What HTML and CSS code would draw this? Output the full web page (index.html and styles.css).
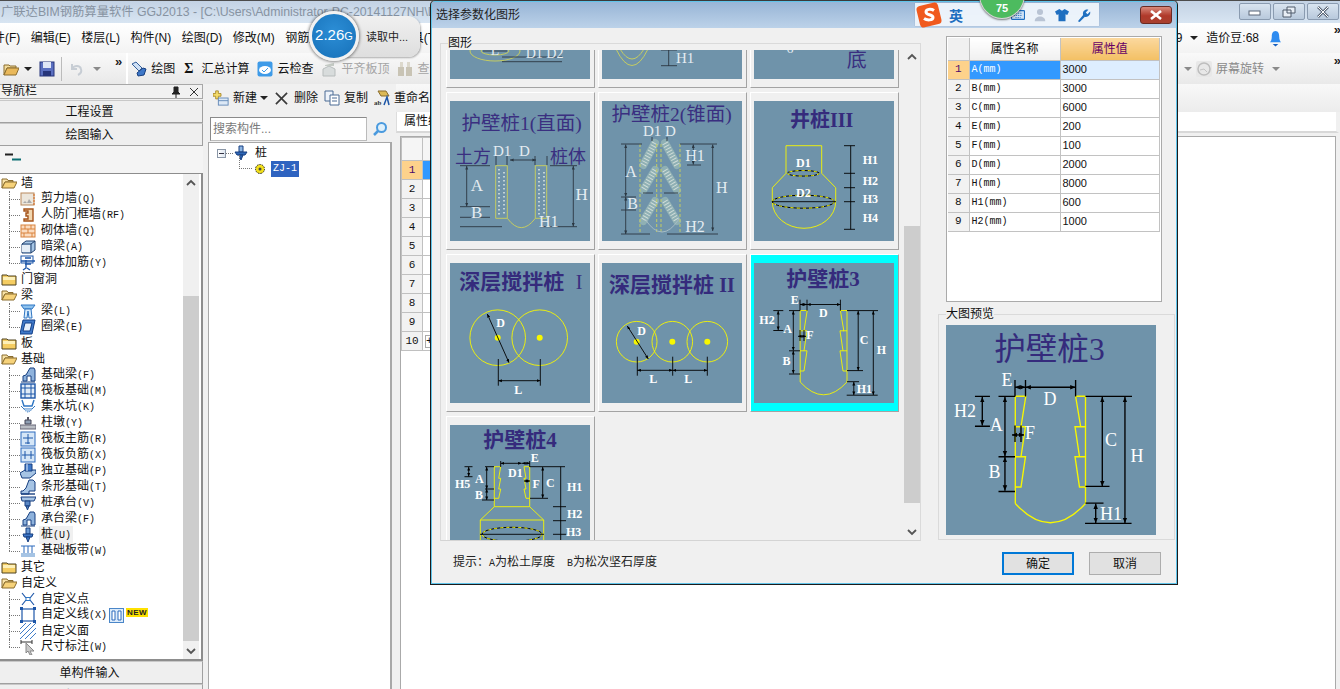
FILE: index.html
```html
<!DOCTYPE html>
<html lang="zh">
<head>
<meta charset="utf-8">
<title>广联达BIM钢筋算量软件 GGJ2013</title>
<link rel="stylesheet" href="styles.css">
</head>
<body>
<svg class="defs" aria-hidden="true">
  <defs>
    <marker id="a" viewBox="0 0 6 6" refX="6" refY="3" markerWidth="4" markerHeight="4" orient="auto-start-reverse"><path d="M0 0.5L6 3L0 5.5z" fill="#000"/></marker>
    <marker id="g" viewBox="0 0 6 6" refX="6" refY="3" markerWidth="4" markerHeight="4" orient="auto-start-reverse"><path d="M0 0.5L6 3L0 5.5z" fill="#2b3742"/></marker>
    <symbol id="fo" viewBox="0 0 16 16"><path d="M1 13V4h5l1 1.5h5V7H4z" fill="#f8e3a8" stroke="#8a6d2f"/><path d="M1 13l3-6h12l-3 6z" fill="#f6d27a" stroke="#8a6d2f"/></symbol>
    <symbol id="fc" viewBox="0 0 16 16"><path d="M1 14V4h5l1 1h8v9z" fill="#f5cd62" stroke="#4f4320"/><path d="M2 6h12v3H2z" fill="#fdf0b8"/></symbol>
    <symbol id="i1" viewBox="0 0 16 16"><rect x="1" y="2" width="13" height="12" fill="#ece6dc" stroke="#b98a5e"/><path d="M3 12l2-2 2 2 2-4 3 4z" fill="#aaa"/><path d="M14 3v11" stroke="#d9691c" stroke-dasharray="2 1"/></symbol>
    <symbol id="i2" viewBox="0 0 16 16"><path d="M4 2h9v12H4v-2h4V9H6V6h2V4H4z" fill="#f2d7b0" stroke="#a5531a" stroke-width="1.4"/></symbol>
    <symbol id="i3" viewBox="0 0 16 16"><rect x="1" y="2" width="14" height="12" fill="#fbdcc0" stroke="#d9833f"/><path d="M1 6h14M1 10h14M5 2v4M11 2v4M8 6v4M4 10v4M12 10v4" stroke="#d9833f"/></symbol>
    <symbol id="i4" viewBox="0 0 16 16"><path d="M2 5l4-3h9v9l-4 3H2z" fill="#a7c7e6" stroke="#24426e"/><path d="M2 5h9v9M11 5l4-3" fill="none" stroke="#24426e"/><path d="M2 6h8v7H2z" fill="#e6eef6"/></symbol>
    <symbol id="i5" viewBox="0 0 16 16"><rect x="1" y="1" width="12" height="7" fill="#fff" stroke="#1d56a8"/><path d="M3 15l3-2V5M10 15l-3-2M1 6h14M5 3h6M5 9h6" stroke="#1d56a8" stroke-width="1.4" fill="none"/></symbol>
    <symbol id="i6" viewBox="0 0 16 16"><path d="M1 2h14l-3 4H4z" fill="#8ec2ee" stroke="#2f76c3"/><path d="M5 6h6l1 9H9L8 8l-1 7H4z" fill="#d8ebfb" stroke="#2f76c3"/></symbol>
    <symbol id="i7" viewBox="0 0 16 16"><path d="M3 1h12l-3 14H0z" fill="#3f78c8" stroke="#123f88"/><path d="M5 4h7l-2 8H3z" fill="#e5eefb" stroke="#123f88"/></symbol>
    <symbol id="i8" viewBox="0 0 16 16"><path d="M3 14V9l3-1 4-7h4l1 2v11h-4V9H7v5z" fill="#8eb2dc" stroke="#173f80"/><path d="M1 15h14" stroke="#173f80"/></symbol>
    <symbol id="i9" viewBox="0 0 16 16"><rect x="1" y="1" width="14" height="14" fill="#e2ecf7" stroke="#1d56a8" stroke-width="1.4"/><path d="M5 1v14M11 1v14M1 5h14M1 11h14" stroke="#1d56a8"/></symbol>
    <symbol id="i10" viewBox="0 0 16 16"><path d="M2 1l2 6h8l2-6" fill="none" stroke="#2f76c3" stroke-width="1.4"/><path d="M1 7l3 3h8l3-3" fill="none" stroke="#2f76c3"/><path d="M4 10q4 6 8 0" fill="#a9c8ea" stroke="#2f76c3" stroke-dasharray="1 1"/></symbol>
    <symbol id="i11" viewBox="0 0 16 16"><path d="M5 9V5h6v4z" fill="#8f9fb3" stroke="#445"/><path d="M7 2h2v3H7z" fill="#556"/><rect x="0" y="10" width="16" height="4" fill="#b9bdc4" stroke="#667"/></symbol>
    <symbol id="i12" viewBox="0 0 16 16"><rect x="1" y="1" width="14" height="14" fill="#d5e6f7" stroke="#2c6bbd"/><path d="M8 3v10M3 7h10M5 12h5" stroke="#1d56a8"/></symbol>
    <symbol id="i13" viewBox="0 0 16 16"><rect x="1" y="1" width="14" height="14" fill="#d5e6f7" stroke="#2c6bbd"/><path d="M2 8h12M5 4v8M11 4v8" stroke="#1d56a8"/></symbol>
    <symbol id="i14" viewBox="0 0 16 16"><path d="M0 10l5-3h11v3l-6 5H2z" fill="#a6c4e4" stroke="#173f80"/><path d="M5 1h7v7H5z" fill="#3f78c8" stroke="#173f80"/><path d="M7 1v7" stroke="#e5eefb"/></symbol>
    <symbol id="i15" viewBox="0 0 16 16"><path d="M1 15v-3h2l3-3 3-8h4l2 2v9h-2L9 12v3z" fill="#a6c4e4" stroke="#173f80"/><path d="M1 15h14" stroke="#173f80" stroke-width="1.4"/></symbol>
    <symbol id="i16" viewBox="0 0 16 16"><path d="M1 2h15l-2 4H2z" fill="#a6c4e4" stroke="#173f80"/><path d="M5 6h5v5H5z" fill="#5a87c4" stroke="#173f80"/><path d="M6 11h3l-1.500 4z" fill="#5a87c4" stroke="#173f80"/></symbol>
    <symbol id="i17" viewBox="0 0 16 16"><path d="M6 1h4v6H6z" fill="#6d9bd4" stroke="#173f80"/><path d="M3 7h10l-1 3H4z" fill="#3f78c8" stroke="#173f80"/><path d="M6 10h4l-2 5z" fill="#3f78c8" stroke="#173f80"/></symbol>
    <symbol id="i18" viewBox="0 0 16 16"><path d="M1 3h14M1 13h14M4 3v10M8 3v10M12 3v10" stroke="#2c6bbd" fill="none"/><rect x="1" y="10" width="14" height="4" fill="#a6c4e4"/></symbol>
    <symbol id="i19" viewBox="0 0 16 16"><path d="M2 2l4 5M14 2l-4 5M2 14l4-5M14 14l-4-5" stroke="#1d56a8" stroke-width="1.200"/><rect x="6" y="6.500" width="4" height="3" fill="#fff" stroke="#2f76c3"/></symbol>
    <symbol id="i20" viewBox="0 0 16 16"><rect x="2" y="2" width="12" height="12" fill="#fff" stroke="#1d56a8" stroke-width="1.200"/><path d="M0 0h3v3H0zM13 0h3v3h-3zM0 13h3v3H0zM13 13h3v3h-3z" fill="#1d56a8"/></symbol>
    <symbol id="i21" viewBox="0 0 16 16"><path d="M0 6l6-6M0 11L11 0M0 16L16 0M5 16L16 5M10 16l6-6" stroke="#3d7cc9"/></symbol>
    <symbol id="i22" viewBox="0 0 16 16"><path d="M1 1v4M1 3h11M12 1v4" stroke="#333"/><path d="M6 4l8 8-4 0 2 4-2 0-2-4-2 2z" fill="#c9c9c9" stroke="#888"/></symbol>
    <symbol id="pile" viewBox="0 0 16 16"><path d="M6 1h4v6H6z" fill="#8db5e2" stroke="#173f80"/><path d="M2 7h12l-2 3H4z" fill="#2e66b5" stroke="#173f80"/><path d="M6 10h4l-2 5z" fill="#2e66b5" stroke="#173f80"/></symbol>

    <symbol id="hbz3" viewBox="0 0 140 140">
      <text class="ti vb" x="69" y="23" font-size="21">护壁桩<tspan class="se">3</tspan></text>
      <path class="y" d="M46.200 47.500V119M46.200 47.500h7L50 67.800h3L50 87.800h3L50 108h-3.800M93 47.500h-6.600l3.400 20.300H86l3 20H86l3 20.200h4M93 47.500V119M46.200 67.800H50M46.200 87.800H50M93 67.800h-4M93 87.800h-4M46.200 119Q69.600 144.600 93 119"/>
      <path class="ln" d="M35 47.600h11M93 47.600h31M46 36.700v11M53 36.700v11M86.400 36.700v11M19.300 47.600h10M19.300 67.500h10M35 87.800h11M35 111h11M93 107.600h16M92.700 132.200h31M93 118.700h12M46 67v11M50 67v11"/>
      <g class="ln" marker-start="url(#a)" marker-end="url(#a)"><path d="M46 41.500h7"/><path d="M53 41.500h33.400"/><path d="M24.200 48v19"/><path d="M39.300 48v39.500"/><path d="M39.300 88v22.500"/><path d="M104.200 48v59.500"/><path d="M119.300 48v84"/><path d="M99.800 119v13"/><path d="M44 73.300h8"/></g>
      <g class="t"><text x="40.700" y="40.700">E</text><text x="69.300" y="53.600">D</text><text x="5.300" y="61" class="st">H2</text><text x="33.500" y="70.400">A</text><text x="56" y="76">F</text><text x="110" y="80.700">C</text><text x="127.300" y="91">H</text><text x="32.400" y="101.800">B</text><text x="102.700" y="130" class="st">H1</text></g>
    </symbol>
  </defs>
</svg>

<div class="app">
  <header class="titlebar">
    <span class="title-text">广联达BIM钢筋算量软件 GGJ2013 - [C:\Users\Administrator-PC-20141127NH\Desktop</span>
    <div class="winbtns">
      <button class="winbtn"><svg viewBox="0 0 16 12"><rect x="2" y="5" width="11" height="4" fill="#fff" stroke="#5b6778"/></svg></button>
      <button class="winbtn"><svg viewBox="0 0 16 12"><path d="M6 1h8v6H6zM2 4h8v7H2z" fill="#e8eef5" stroke="#4f5b6b"/></svg></button>
      <button class="winbtn"><svg viewBox="0 0 16 12"><path d="M3 1l10 10M13 1L3 11" stroke="#5b6778" stroke-width="2.600"/><path d="M3 1l10 10M13 1L3 11" stroke="#fff" stroke-width="1"/></svg></button>
    </div>
  </header>

  <nav class="menubar">
    <span class="menu first">文件(F)</span><span class="menu">编辑(E)</span><span class="menu">楼层(L)</span><span class="menu">构件(N)</span><span class="menu">绘图(D)</span><span class="menu">修改(M)</span><span class="menu">钢筋量(Q)</span><span class="menu">视图(V)</span><span class="menu">工具(T)</span>
    <div class="menu-right">
      <span class="menu">9</span><span class="caret dark"></span><span class="menu">造价豆:68</span>
      <svg class="bell" viewBox="0 0 14 18"><path d="M7 1c3 0 4 3 4 6s1 5 2 6H1c1-1 2-3 2-6s1-6 4-6z" fill="#2f8cf0"/><path d="M4 15h6l-3 2.500z" fill="#1660c0"/></svg>
      <span class="more">»</span>
    </div>
  </nav>

  <div class="toolbar">
    <svg class="tb-ic" viewBox="0 0 16 16"><path d="M1 14V4h5l1 1h6v2H4z" fill="#f3dc9d" stroke="#8a6d2f"/><path d="M1 14l3-7h12l-3 7z" fill="#e9b85a" stroke="#8a6d2f"/></svg>
    <span class="caret dark gap-a"></span>
    <svg class="tb-ic gap-b" viewBox="0 0 16 16"><rect x="1" y="1" width="14" height="14" fill="#5a6fc0" stroke="#27357a"/><rect x="4" y="1" width="8" height="6" fill="#dfe6f6"/><rect x="4" y="10" width="8" height="5" fill="#27357a"/></svg>
    <span class="tb-div"></span>
    <svg class="tb-ic gap-c" viewBox="0 0 16 16"><path d="M3 3v5h5M3 8c2-4 8-4 9 0 1 3-1 5-3 6" fill="none" stroke="#c7cdd4" stroke-width="2"/></svg>
    <span class="caret gap-d"></span>
    <span class="more gap-e">»</span>
    <span class="tb-sep"></span>
    <svg class="tb-ic" viewBox="0 0 16 16"><path d="M1 3l4-2 6 6-3 3z" fill="#cfe0f4" stroke="#345f9a"/><path d="M6 12l6-5 3 1-2 6-6 1z" fill="#3f78c8" stroke="#173f80"/></svg>
    <span class="tb-txt">绘图</span>
    <span class="sigma">Σ</span>
    <span class="tb-txt">汇总计算</span>
    <svg class="tb-ic gap-f" viewBox="0 0 16 16"><rect x="0.500" y="0.500" width="15" height="15" rx="2" fill="#3f9be8"/><ellipse cx="8" cy="9" rx="6" ry="4" fill="#fff"/><path d="M5 9l2 2 4-4" stroke="#3f9be8" fill="none"/></svg>
    <span class="tb-txt">云检查</span>
    <svg class="tb-ic gap-f" viewBox="0 0 16 16"><path d="M2 15V8l6-3 6 3v7z" fill="#d8dcdc" stroke="#b7bcbc"/><path d="M4 4l9-2v3H4z" fill="#c5cbc5"/></svg>
    <span class="tb-txt off">平齐板顶</span>
    <svg class="tb-ic gap-f" viewBox="0 0 16 16"><rect x="1" y="6" width="6" height="9" fill="#c9c4b5"/><rect x="9" y="6" width="6" height="9" fill="#c9c4b5"/><rect x="3" y="1" width="3" height="5" fill="#dcd8cc"/><rect x="10" y="1" width="3" height="5" fill="#dcd8cc"/></svg>
    <span class="tb-txt off">查看</span>
    <div class="menu-right second">
      <span class="caret"></span>
      <svg class="tb-ic" viewBox="0 0 16 16"><rect x="0" y="0" width="16" height="16" rx="2" fill="#e8e8e8"/><circle cx="8" cy="8" r="6" fill="none" stroke="#bdbdbd" stroke-width="1.500"/><path d="M4 9l4-1 3 3" stroke="#c4c4c4" fill="none"/></svg>
      <span class="tb-txt off2">屏幕旋转</span><span class="caret"></span>
      <span class="more">»</span>
    </div>
  </div>

  <div class="workspace">
    <aside class="nav">
      <div class="nav-head"><span>导航栏</span><span class="nav-tools"><svg viewBox="0 0 10 12"><path d="M3 1h4v5l2 2H1l2-2zM5 8v4" fill="#222" stroke="#222"/></svg><svg viewBox="0 0 10 12"><path d="M1 2l8 8M9 2l-8 8" stroke="#333"/></svg></span></div>
      <div class="nav-btn">工程设置</div>
      <div class="nav-btn">绘图输入</div>
      <div class="nav-ic"><svg viewBox="0 0 18 8"><path d="M0 1.500h8" stroke="#222" stroke-width="2"/><path d="M7 6.500h9" stroke="#0d6f73" stroke-width="2"/></svg></div>
      <div class="tree-box">
        <div class="tree">
          <div class="node"><svg class="ic"><use href="#fo"/></svg>墙</div>
          <div class="leaf"><svg class="ic"><use href="#i1"/></svg><span>剪力墙<i class="lat">(Q)</i></span></div>
          <div class="leaf"><svg class="ic"><use href="#i2"/></svg><span>人防门框墙<i class="lat">(RF)</i></span></div>
          <div class="leaf"><svg class="ic"><use href="#i3"/></svg><span>砌体墙<i class="lat">(Q)</i></span></div>
          <div class="leaf"><svg class="ic"><use href="#i4"/></svg><span>暗梁<i class="lat">(A)</i></span></div>
          <div class="leaf last"><svg class="ic"><use href="#i5"/></svg><span>砌体加筋<i class="lat">(Y)</i></span></div>
          <div class="node"><svg class="ic"><use href="#fc"/></svg>门窗洞</div>
          <div class="node"><svg class="ic"><use href="#fo"/></svg>梁</div>
          <div class="leaf"><svg class="ic"><use href="#i6"/></svg><span>梁<i class="lat">(L)</i></span></div>
          <div class="leaf last"><svg class="ic"><use href="#i7"/></svg><span>圈梁<i class="lat">(E)</i></span></div>
          <div class="node"><svg class="ic"><use href="#fc"/></svg>板</div>
          <div class="node"><svg class="ic"><use href="#fo"/></svg>基础</div>
          <div class="leaf"><svg class="ic"><use href="#i8"/></svg><span>基础梁<i class="lat">(F)</i></span></div>
          <div class="leaf"><svg class="ic"><use href="#i9"/></svg><span>筏板基础<i class="lat">(M)</i></span></div>
          <div class="leaf"><svg class="ic"><use href="#i10"/></svg><span>集水坑<i class="lat">(K)</i></span></div>
          <div class="leaf"><svg class="ic"><use href="#i11"/></svg><span>柱墩<i class="lat">(Y)</i></span></div>
          <div class="leaf"><svg class="ic"><use href="#i12"/></svg><span>筏板主筋<i class="lat">(R)</i></span></div>
          <div class="leaf"><svg class="ic"><use href="#i13"/></svg><span>筏板负筋<i class="lat">(X)</i></span></div>
          <div class="leaf"><svg class="ic"><use href="#i14"/></svg><span>独立基础<i class="lat">(P)</i></span></div>
          <div class="leaf"><svg class="ic"><use href="#i15"/></svg><span>条形基础<i class="lat">(T)</i></span></div>
          <div class="leaf"><svg class="ic"><use href="#i16"/></svg><span>桩承台<i class="lat">(V)</i></span></div>
          <div class="leaf"><svg class="ic"><use href="#i8"/></svg><span>承台梁<i class="lat">(F)</i></span></div>
          <div class="leaf"><svg class="ic"><use href="#i17"/></svg><span class="hl">桩<i class="lat">(U)</i></span></div>
          <div class="leaf last"><svg class="ic"><use href="#i18"/></svg><span>基础板带<i class="lat">(W)</i></span></div>
          <div class="node"><svg class="ic"><use href="#fc"/></svg>其它</div>
          <div class="node"><svg class="ic"><use href="#fo"/></svg>自定义</div>
          <div class="leaf"><svg class="ic"><use href="#i19"/></svg><span>自定义点</span></div>
          <div class="leaf"><svg class="ic"><use href="#i20"/></svg><span>自定义线<i class="lat">(X)</i></span><svg class="grid-ic" viewBox="0 0 15 15"><rect x="0.500" y="0.500" width="14" height="14" fill="#dcebfa" stroke="#4a86c8"/><path d="M3 3h3v9H3zM9 3h3v9H9z" fill="#fff" stroke="#2c6bbd"/></svg><b class="new">NEW</b></div>
          <div class="leaf"><svg class="ic"><use href="#i21"/></svg><span>自定义面</span></div>
          <div class="leaf last"><svg class="ic"><use href="#i22"/></svg><span>尺寸标注<i class="lat">(W)</i></span></div>
        </div>
        <div class="vbar nav-bar">
          <span class="sb-btn"><svg viewBox="0 0 10 8"><path d="M1 6l4-4 4 4" fill="none" stroke="#555" stroke-width="1.800"/></svg></span>
          <span class="sb-track"><span class="sb-thumb"></span></span>
          <span class="sb-btn"><svg viewBox="0 0 10 8"><path d="M1 2l4 4 4-4" fill="none" stroke="#555" stroke-width="1.800"/></svg></span>
        </div>
      </div>
      <div class="nav-btn">单构件输入</div>
      <div class="nav-btn">报表预览</div>
    </aside>

    <section class="comp">
      <div class="comp-tools">
        <svg class="tb-ic" viewBox="0 0 18 18"><path d="M3 1h3v3h3v3H6v3H3V7H0V4h3z" fill="#f5dc6a" stroke="#a8892a"/><rect x="6" y="9" width="11" height="8" fill="#dce8f6" stroke="#5f86b5"/><path d="M6 12h11" stroke="#5f86b5"/></svg>
        <span class="tb-txt">新建</span><span class="caret dark"></span>
        <svg class="tb-ic x-ic" viewBox="0 0 14 14"><path d="M1 1l12 12M13 1L1 13" stroke="#3a3a3a" stroke-width="1.800"/></svg>
        <span class="tb-txt">删除</span>
        <svg class="tb-ic" viewBox="0 0 16 16"><path d="M1 1h8v10H1z" fill="#eef3fa" stroke="#4b6a94"/><path d="M6 5h9v10H6z" fill="#fff" stroke="#4b6a94"/><path d="M8 8h5M8 11h5" stroke="#4b6a94"/></svg>
        <span class="tb-txt">复制</span>
        <svg class="tb-ic" viewBox="0 0 16 16"><path d="M4 1h8l3 5H7z" fill="#dcb956" stroke="#8a6d2f"/><text class="abc" x="0" y="15">ab</text><path d="M10 15l3-8 2 8" fill="none" stroke="#1d56a8" stroke-width="1.500"/></svg>
        <span class="tb-txt">重命名</span>
      </div>
      <div class="search"><input class="search-in" type="text" placeholder="搜索构件..."><svg viewBox="0 0 16 16"><circle cx="9.500" cy="6.500" r="4.500" fill="#dff0fb" stroke="#4a9ade" stroke-width="2"/><path d="M6 10l-4 4" stroke="#4a9ade" stroke-width="2.500"/></svg></div>
      <div class="comp-tree">
        <div class="ct-row"><span class="ct-box"></span><span class="ct-dash"></span><svg class="ic"><use href="#pile"/></svg><span class="ct-name">桩</span></div>
        <div class="ct-row ct-sub"><span class="ct-l"></span><svg class="gear" viewBox="0 0 12 12"><circle cx="6" cy="6" r="4.500" fill="#f3e01a" stroke="#222" stroke-dasharray="1.500 1"/><circle cx="6" cy="6" r="1.500" fill="#444"/></svg><span class="ct-sel">ZJ-1</span></div>
      </div>
    </section>

    <section class="mainp">
      <div class="main-tools"></div>
      <div class="tabs"><span>属性编辑</span></div>
      <div class="grid-wrap">
        <table class="pgrid">
          <tr class="ph"><th></th><td></td></tr>
          <tr class="on"><th>1</th><td class="blue"></td></tr>
          <tr><th>2</th><td></td></tr><tr><th>3</th><td></td></tr><tr><th>4</th><td></td></tr><tr><th>5</th><td></td></tr><tr><th>6</th><td></td></tr><tr><th>7</th><td></td></tr><tr><th>8</th><td></td></tr><tr><th>9</th><td></td></tr>
          <tr><th>10</th><td><span class="plus">+</span></td></tr>
        </table>
      </div>
    </section>
  </div>
</div>

<div class="mem">
  <div class="mem-circle">2.26<small>G</small></div>
  <span class="mem-txt">读取中...</span>
</div>

<div class="dialog">
  <div class="dlg-title">
    <span>选择参数化图形</span>
    <button class="dlg-close"><svg viewBox="0 0 14 10"><path d="M2 1l10 8M12 1L2 9" stroke="#fff" stroke-width="2.600"/></svg></button>
  </div>
  <div class="dlg-body">
    <div class="group left-g">
      <span class="g-label">图形</span>
      <div class="scroller">
        <div class="cards">
          <div class="card"><svg class="pic" viewBox="0 0 140 140">
            <path class="soft-y" d="M20 112a25 10 0 1 0 50 0a25 10 0 1 0-50 0M31 112a14 4 0 1 0 28 0a14 4 0 1 0-28 0"/>
            <path class="soft" d="M52 118h60M52 122.700h60M33 112h24"/>
            <text class="lt" x="75.700" y="119.300" font-size="14">D1 D2</text><text class="lt m" x="45" y="116" font-size="14">L</text>
          </svg></div>
          <div class="card"><svg class="pic" viewBox="0 0 140 140">
            <path class="soft-y" d="M14 110Q30 143 46 110M18 110Q30 130 42 110"/>
            <path class="soft" d="M59 111h16M59 126.700h16M66.700 111v16"/>
            <text class="lt" x="74" y="124.300" font-size="15">H1</text>
          </svg></div>
          <div class="card"><svg class="pic" viewBox="0 0 140 140">
            <text class="lt m" x="36" y="114" font-size="14">6</text>
            <text class="ti" x="102.700" y="127.700" font-size="20">底</text>
          </svg></div>

          <div class="card"><svg class="pic" viewBox="0 0 140 140">
            <text class="ti" x="71.700" y="29" font-size="19.500">护壁桩<tspan class="se">1(</tspan>直面<tspan class="se">)</tspan></text>
            <text class="ti" x="23" y="61.700" font-size="18">土方</text><text class="ti" x="118" y="61.700" font-size="18">桩体</text>
            <path class="soft-y" d="M45.700 64.700h11.600v52.600H45.700zM85.300 64.700h11.400v52.600H85.300zM57.300 117.300Q71.300 136 85.300 117.300"/>
            <path class="dots" d="M49 68v46M54 71v43M89 68v46M94 71v43"/>
            <path class="soft" d="M10 64.700h30M10 105.700h30M10 116.300h30M10 125.700h42M100 64.700h27M90 125.700h37M46 55v9M57 55v9M85 55v9M97 55v9"/>
            <g class="soft" marker-start="url(#g)" marker-end="url(#g)"><path d="M16.700 65v40.500"/><path d="M123.300 65v60.500"/><path d="M60 59h26"/></g>
            <text class="lt" x="43" y="55" font-size="15">D1</text><text class="lt" x="69" y="55" font-size="15">D</text><text class="lt m" x="27" y="89.700" font-size="17">A</text><text class="lt m" x="26.700" y="117" font-size="17">B</text><text class="lt m" x="131.700" y="99" font-size="17">H</text><text class="lt" x="89" y="126" font-size="16">H1</text>
          </svg></div>
          <div class="card"><svg class="pic" viewBox="0 0 140 140">
            <text class="ti" x="69.700" y="19.700" font-size="19.500">护壁桩<tspan class="se">2(</tspan>锥面<tspan class="se">)</tspan></text>
            <text class="lt" x="41" y="35" font-size="15">D1 D</text>
            <path class="caps" d="M53 42L41.300 64M63 42L75 64M53 69L41.300 89M63 69L75 89M53 100L41.300 120M63 100L75 120"/>
            <path class="caps-d" d="M53 42L41.300 64M63 42L75 64M53 69L41.300 89M63 69L75 89M53 100L41.300 120M63 100L75 120"/>
            <path class="soft-yd" d="M38 43v89M54.700 43v89M59 43v89M78 43v89"/>
            <path class="faint" d="M43 118Q60 144 77 118"/>
            <path class="soft" d="M19 43h21M19 133h29M65 133h51M78 43h37M85 64h14M19 96h15M19 109h15M41 92h10M62 92h14M50 40v-4M65 40v-4"/>
            <g class="soft" marker-start="url(#g)" marker-end="url(#g)"><path d="M23.700 43.500v52"/><path d="M23.700 96v37"/><path d="M110.700 43.500v86.500"/><path d="M91.300 43.500v20"/></g>
            <text class="lt m" x="29" y="76" font-size="16">A</text><text class="lt m" x="30.700" y="108" font-size="16">B</text><text class="lt m" x="93" y="60" font-size="16">H1</text><text class="lt m" x="119.700" y="92.300" font-size="16">H</text><text class="lt m" x="93" y="130.700" font-size="16">H2</text>
          </svg></div>
          <div class="card"><svg class="pic" viewBox="0 0 140 140">
            <text class="ti b" x="67.700" y="26.300" font-size="20">井桩<tspan class="se">III</tspan></text>
            <path class="y" d="M32 72.300V44.700h35.700v27.600M32 72.300L18.300 86.700v14M67.700 72.300L81.700 86.700v14M18.300 100.700A31.700 26.600 0 0 0 81.700 100.700"/>
            <ellipse class="dash" cx="49.300" cy="72.300" rx="16" ry="2.800"/><ellipse class="dash" cx="49.300" cy="100.700" rx="31" ry="6.500"/>
            <ellipse class="dash-y" cx="49.300" cy="72.300" rx="16" ry="2.800"/><ellipse class="dash-y" cx="49.300" cy="100.700" rx="31" ry="6.500"/>
            <path class="ln" d="M18 100.700h64M90 44.700h11M90 72.300h11M90 86.700h11M90 100.700h11M90 128.300h11M96.700 44.700v83.600"/>
            <g class="t st"><text x="42" y="65.700">D1</text><text x="42" y="95.700">D2</text><text x="108.700" y="63">H1</text><text x="108.700" y="84">H2</text><text x="108.700" y="101.700">H3</text><text x="108.700" y="120.700">H4</text></g>
          </svg></div>

          <div class="card"><svg class="pic" viewBox="0 0 140 140">
            <text class="ti b s" x="9.300" y="26.300" font-size="21">深层搅拌桩</text><text class="ti se" x="129" y="26.300" font-size="20">I</text>
            <circle class="y" cx="47.700" cy="74.700" r="27.800"/><circle class="y" cx="89.700" cy="74.700" r="27.800"/>
            <circle class="dot" cx="47.700" cy="74.700" r="3"/><circle class="dot" cx="89.700" cy="74.700" r="3"/>
            <g class="ln" marker-start="url(#a)" marker-end="url(#a)"><path d="M37.300 51L59 99.700"/><path d="M48.300 117.700H90.300"/></g>
            <path class="ln" d="M48.300 96v26.700M90.300 96v26.700"/>
            <g class="t"><text x="50.700" y="64.300">D</text><text x="68.300" y="131">L</text></g>
          </svg></div>
          <div class="card"><svg class="pic" viewBox="0 0 140 140">
            <text class="ti b s" x="7" y="28.700" font-size="21">深层搅拌桩</text><text class="ti se b" x="125" y="28.700" font-size="20">II</text>
            <circle class="y" cx="34.700" cy="78.700" r="20.300"/><circle class="y" cx="70.300" cy="78.700" r="20.300"/><circle class="y" cx="105.300" cy="78.700" r="20.300"/>
            <circle class="dot" cx="34.700" cy="78.700" r="3"/><circle class="dot" cx="70.300" cy="78.700" r="3"/><circle class="dot" cx="105.300" cy="78.700" r="3"/>
            <g class="ln" marker-start="url(#a)" marker-end="url(#a)"><path d="M25.300 63L46.300 96"/><path d="M35.300 107.300H70.700"/><path d="M70.700 107.300H105.300"/></g>
            <path class="ln" d="M35.300 93.700v19M70.700 93.700v19M105.300 93.700v19"/>
            <g class="t"><text x="39.700" y="72">D</text><text x="51.300" y="120.300">L</text><text x="86.300" y="120.300">L</text></g>
          </svg></div>
          <div class="card sel"><svg class="pic" viewBox="0 0 140 140"><use href="#hbz3"/></svg></div>

          <div class="card"><svg class="pic" viewBox="0 0 140 140">
            <text class="ti b" x="70" y="21.700" font-size="21">护壁桩<tspan class="se">4</tspan></text>
            <path class="y" d="M44.300 41.700V81.700M79.700 41.700V81.700M44.300 41.700h6.400l-2 11.600h2l-2 10.700h2l-2 9.300h-4.400M79.700 41.700H74l2 11.600h-2l2 10.700h-2l2 9.300h3.700M44.300 81.700h35.400L93.700 95H30.300zM30.300 95v45M93.700 95v45"/>
            <ellipse class="dash" cx="62" cy="109.300" rx="30" ry="7"/><ellipse class="dash-y" cx="62" cy="109.300" rx="30" ry="7"/>
            <path class="ln" d="M35 41.700h9M80 41.700h35M110.700 41.700V140M103 81.700h13M103 95.700h13M103 109.300h13M80 73.300h18M35 64h9M32 75h12M14.500 41.700h8M14.500 51.700h8M50.700 36v6M79.700 36v6M30 109.300h64"/>
            <g class="ln" marker-start="url(#a)" marker-end="url(#a)"><path d="M50.700 38.300h21"/><path d="M72 38.300h8"/><path d="M18.700 42v9.500"/><path d="M36.700 42v22"/><path d="M36.700 64v11"/><path d="M92.700 42v31"/><path d="M74 56h6"/></g>
            <g class="t st"><text x="80.700" y="36.700">E</text><text x="5" y="63">H5</text><text x="25" y="57.700">A</text><text x="25" y="74">B</text><text x="58" y="52.300">D1</text><text x="82.500" y="62.700">F</text><text x="96" y="61.700">C</text><text x="117" y="66">H1</text><text x="117" y="93.300">H2</text><text x="116" y="111">H3</text></g>
          </svg></div>
        </div>
      </div>
      <div class="vbar dlg-bar">
        <span class="sb-btn"><svg viewBox="0 0 10 8"><path d="M1 6l4-4 4 4" fill="none" stroke="#555" stroke-width="1.800"/></svg></span>
        <span class="sb-track"><span class="sb-thumb"></span></span>
        <span class="sb-btn"><svg viewBox="0 0 10 8"><path d="M1 2l4 4 4-4" fill="none" stroke="#555" stroke-width="1.800"/></svg></span>
      </div>
    </div>
    <div class="right-col">
      <div class="prop-box">
        <table class="prop">
          <tr><th></th><th class="h-name">属性名称</th><th class="h-val">属性值</th></tr>
          <tr class="on"><th>1</th><td class="nm blue">A(mm)</td><td class="pale">3000</td></tr>
          <tr><th>2</th><td class="nm">B(mm)</td><td>3000</td></tr>
          <tr><th>3</th><td class="nm">C(mm)</td><td>6000</td></tr>
          <tr><th>4</th><td class="nm">E(mm)</td><td>200</td></tr>
          <tr><th>5</th><td class="nm">F(mm)</td><td>100</td></tr>
          <tr><th>6</th><td class="nm">D(mm)</td><td>2000</td></tr>
          <tr><th>7</th><td class="nm">H(mm)</td><td>8000</td></tr>
          <tr><th>8</th><td class="nm">H1(mm)</td><td>600</td></tr>
          <tr><th>9</th><td class="nm">H2(mm)</td><td>1000</td></tr>
        </table>
      </div>
      <div class="group prev-g">
        <span class="g-label">大图预览</span>
        <svg class="bigpic" viewBox="0 0 140 140"><use href="#hbz3"/></svg>
      </div>
    </div>
  </div>
  <div class="dlg-foot">
    <span class="hint">提示：<i class="lat">A</i>为松土厚度　<i class="lat">B</i>为松次坚石厚度</span>
    <div class="dlg-btns"><button class="btn primary">确定</button><button class="btn">取消</button></div>
  </div>
</div>

<div class="ime">
  <svg class="ime-s" viewBox="0 0 28 28"><rect x="3" y="3" width="22" height="22" rx="4" fill="#f05a1e" transform="rotate(-14 14 14)"/><path d="M19 9.500c-3-2-8-1.500-8 1.500 0 3.500 7 2 7 5.500 0 3-6 3-9 1" fill="none" stroke="#fff" stroke-width="3"/></svg>
  <span class="ime-en">英</span>
  <svg class="ime-i" viewBox="0 0 16 16"><path d="M12 1A8 8 0 0 1 2 13 8 8 0 0 0 12 1z" fill="#1f6fc0"/></svg>
  <span class="ime-gap"></span>
  <svg class="ime-i" viewBox="0 0 16 16"><rect x="0.500" y="3" width="15" height="10" rx="1" fill="#cfe2f5" stroke="#1f6fc0" stroke-width="1.400"/><path d="M3 6h10M3 8.500h10M5 11h6" stroke="#1f6fc0" stroke-dasharray="1.500 1"/></svg>
  <svg class="ime-i" viewBox="0 0 16 16"><circle cx="8" cy="4.500" r="3.500" fill="#b9c4d4"/><path d="M2 15c0-7 12-7 12 0z" fill="#b9c4d4"/></svg>
  <svg class="ime-i" viewBox="0 0 16 16"><path d="M5 1L0 4l2 4 2-1v8h8V7l2 1 2-4-5-3-3 2z" fill="#1f6fc0"/></svg>
  <svg class="ime-i" viewBox="0 0 16 16"><path d="M1 15l6-7c-1-4 2-7 6-6l-3 3 2 2 3-3c1 4-3 7-6 6l-6 6z" fill="#1f6fc0"/></svg>
</div>
<div class="badge75">75</div>
</body>
</html>
```

FILE: styles.css
```css
* { box-sizing: border-box; }
html, body { margin: 0; padding: 0; }
body {
  width: 1340px; height: 689px; overflow: hidden; position: relative;
  background: #f0f0f0; color: #111;
  font: 12px/16px "Liberation Sans", "Noto Sans CJK SC", sans-serif;
}
button { font: inherit; padding: 0; cursor: default; }
.defs { position: absolute; width: 0; height: 0; }
.lat { font: normal 10px/16px "Liberation Mono", monospace; }

.app { display: flex; flex-direction: column; height: 689px; }

/* title */
.titlebar {
  height: 23px; flex: none; display: flex; align-items: center; justify-content: space-between; overflow: hidden;
  border-top: 1px solid #4c4c4c; padding: 0 1px 0 1px;
  background: linear-gradient(#c3d2e4, #d8e5f2);
}
.title-text { color: #8793a2; font-size: 12.3px; white-space: nowrap; overflow: hidden; width: 800px; }
.winbtns { display: flex; gap: 2px; flex: none; align-self: flex-start; margin-top: 2px; }
.winbtn {
  width: 32px; height: 17px; border: 1px solid #8a9bb0; border-radius: 2px;
  background: linear-gradient(#d9e4f0, #b8c9dc); display: flex; align-items: center; justify-content: center;
}
.winbtn svg { width: 16px; height: 12px; }

/* menu + toolbar */
.menubar {
  height: 30px; flex: none; display: flex; align-items: center; gap: 10.5px; overflow: hidden;
  background: linear-gradient(#fff, #f3f3f3);
}
.menu { white-space: nowrap; color: #111; }
.menu.first { margin-left: -19px; }
.menu-right { margin-left: auto; display: flex; align-items: center; position: relative; padding-right: 58px; }
.menu-right .menu { margin-right: 8px; }
.menu-right .caret { margin-right: 8px; }
.caret { width: 0; height: 0; border: 4px solid transparent; border-top-color: #8a8a8a; border-bottom: 0; display: inline-block; }
.caret.dark { border-top-color: #222; }
.bell { width: 13px; height: 17px; margin-left: 2px; }
.more { position: absolute; right: -1px; top: -6px; font: bold 13px/12px "Liberation Sans", sans-serif; color: #222; }
.toolbar .more.gap-e { position: static; margin: -14px 4px 0 14px; }

.toolbar {
  height: 31px; flex: none; display: flex; align-items: center; padding-left: 3px; overflow: hidden;
  background: linear-gradient(#f9f9f9, #e9e9e9);
}
.tb-ic { width: 16px; height: 16px; flex: none; }
.tb-txt { white-space: nowrap; margin-left: 4px; color: #111; }
.tb-txt.off { color: #a5a5a5; }
.tb-txt.off2 { color: #8a8a8a; margin: 0 4px 0 0; }
.gap-a { margin-left: 5px; } .gap-b { margin-left: 7px; } .gap-c { margin-left: 7px; } .gap-d { margin-left: 8px; }
.gap-f { margin-left: 7px; }
.tb-txt + .tb-ic.gap-f { margin-left: 8px; }
.tb-div { width: 1px; height: 24px; background: #bbb; margin-left: 6px; }
.tb-sep { width: 2px; height: 31px; background: #fff; margin-right: 3px; }
.sigma { font: bold 14px/16px "Liberation Serif", serif; margin-left: 9px; margin-right: 4px; }
.menu-right.second { gap: 4px; padding-right: 60px; }
.menu-right.second .caret { margin-right: 0; }
.menu-right.second .more { right: -1px; top: -6px; }

/* workspace */
.workspace { flex: 1; display: flex; min-height: 0; overflow: hidden; background: #f0f0f0; }
.nav { width: 203px; flex: none; display: flex; flex-direction: column; margin-right: 5px; }
.nav-head {
  height: 15px; flex: none; display: flex; justify-content: space-between; align-items: center; padding: 0 3px 0 1px; line-height: 13px;
  border: 1px solid #a8a8a8; border-left: 0; background: #f1f1f1; margin-bottom: 1px;
}
.nav-tools { display: flex; gap: 8px; }
.nav-tools svg { width: 10px; height: 12px; }
.nav-btn {
  height: 23px; flex: none; text-align: center; line-height: 22px; padding-right: 23px; background: #efefef;
  border: 1px solid #a0a0a0; border-left: 0; border-top-color: #c8c8c8; font-size: 12px;
}
.nav-ic { height: 27px; flex: none; background: #f4f4f4; padding: 7px 0 0 5px; }
.nav-ic svg { width: 18px; height: 8px; display: block; }
.tree-box { height: 488px; flex: none; display: flex; border: 1px solid #8d8d8d; border-width: 1px 2px 2px 0; background: #fff; }
.tree { flex: 1; padding-top: 1px; min-width: 0; overflow: hidden; }
.node, .leaf { height: 16px; display: flex; align-items: center; white-space: nowrap; position: relative; }
.node { padding-left: 1px; }
.node .ic { margin-right: 4px; }
.ic { width: 16px; height: 16px; flex: none; }
.leaf { padding-left: 20px; }
.leaf .ic { margin-right: 5px; }
.leaf::before { content: ""; position: absolute; left: 9px; top: 0; height: 100%; border-left: 1px dotted #777; }
.leaf.last::before { height: 50%; }
.leaf::after { content: ""; position: absolute; left: 9px; top: 8px; width: 11px; border-top: 1px dotted #777; }
.hl { background: #f0f0f0; padding: 0 2px; margin-left: -2px; }
.grid-ic { width: 15px; height: 15px; margin-left: 2px; }
.new {
  font: bold 8px/9px "Liberation Sans", sans-serif; background: #ffe100; color: #222; padding: 0 1px; margin: -6px 0 0 2px; letter-spacing: .4px;
}

.vbar { display: flex; flex-direction: column; background: #f0f0f0; flex: none; }
.sb-btn { height: 17px; flex: none; display: flex; align-items: center; justify-content: center; }
.sb-btn svg { width: 10px; height: 8px; }
.sb-track { flex: 1; display: block; min-height: 0; }
.sb-thumb { display: block; background: #cdcdcd; }
.nav-bar { width: 16px; margin-right: 2px; }
.nav-bar .sb-thumb { margin-top: 105px; height: 345px; }

/* components */
.comp { width: 184px; flex: none; display: flex; flex-direction: column; margin-right: 4px; }
.comp-tools { height: 30px; flex: none; display: flex; align-items: center; padding: 0 0 2px 5px; overflow: visible; white-space: nowrap; position: relative; z-index: 1; }
.comp-tools .caret { margin: 0 0 0 3px; }
.x-ic { width: 13px; height: 13px; margin-left: 7px; margin-right: 2px; }
.comp-tools .tb-txt { margin-left: 4px; margin-right: 6px; }
.comp-tools .tb-txt:nth-of-type(1) { margin-right: 0; }
.search { height: 28px; flex: none; display: flex; align-items: center; padding: 3px 0 2px 2px; }
.search-in { width: 157px; height: 24px; border: 1px solid #8a8a8a; border-right-color: #bbb; border-bottom-color: #bbb; background: #fff; padding: 0 2px; font: 12px "Liberation Sans", "Noto Sans CJK SC", sans-serif; }
.search-in::placeholder { color: #7a7a7a; opacity: 1; }
.search svg { width: 16px; height: 16px; margin-left: 5px; }
.comp-tree { flex: 1; background: #fff; border: 1px solid #a8a8a8; border-width: 1px 2px 0 1px; padding: 0 0 0 8px; }
.ct-row { height: 16px; margin-top: 2px; display: flex; align-items: center; }
.ct-box { width: 9px; height: 9px; border: 1px solid #8a96a6; background: linear-gradient(90deg, #fff, #dde5ef); position: relative; flex: none; }
.ct-box::after { content: ""; position: absolute; left: 1px; top: 3px; width: 5px; height: 1px; background: #334; }
.ct-dash { width: 7px; border-top: 1px dotted #777; }
.ct-name { margin-left: 6px; }
.ct-sub { padding-left: 22px; margin-top: 0; }
.ct-l { width: 13px; height: 14px; border-left: 1px dotted #777; border-bottom: 1px dotted #777; margin-top: -14px; flex: none; margin-right: 2px; }
.gear { width: 12px; height: 12px; flex: none; }
.ct-sel { background: #2e63c0; color: #fff; font: 10px/16px "Liberation Mono", monospace; padding: 0 2px; margin-left: 5px; }

/* main */
.mainp { flex: 1; min-width: 0; display: flex; flex-direction: column; }
.main-tools { height: 28px; flex: none; background: linear-gradient(#f8f8f8, #ececec); }
.tabs { height: 21px; flex: none; background: #fff; border-left: 1px solid #ddd; border-right: 3px solid #f0f0f0; border-bottom: 2px solid #d8d8d8; padding-left: 7px; line-height: 19px; margin-right: 1px; }
.grid-wrap { flex: 1; margin: 3px 4px 0 4px; background: #fff; border: 1px solid #aaa; border-bottom: 0; }
.pgrid { border-collapse: collapse; table-layout: fixed; width: 200px; }
.pgrid th, .pgrid td { border: 1px solid #c0c0c0; padding: 0; height: 19px; font: 11px/17px "Liberation Mono", monospace; }
.pgrid th { width: 21px; background: #f2f2f2; font-weight: normal; }
.ph th, .ph td { height: 23px; background: #f5f5f5; }
.on th { background: #fdd28b; color: #4b0a6b; font-weight: normal; }
.pgrid td.blue, .prop td.blue { background: #3399ff; color: #fff; }
.plus { display: inline-block; width: 9px; height: 13px; border: 1px solid #aaa; margin: 2px; line-height: 10px; }

/* memory popup */
.mem {
  position: absolute; z-index: 6; left: 320px; top: 16px; width: 100px; height: 41px; padding-left: 46px; border-radius: 0 12px 12px 0;
  background: linear-gradient(#f0f0f0, #dedede); box-shadow: 1px 1px 2px rgba(0,0,0,.3); display: flex; align-items: center;
}
.mem-circle {
  position: absolute; left: -11px; top: -5px; width: 50px; height: 50px; border-radius: 50%;
  background: radial-gradient(circle at 50% 40%, #2c8ed6, #1670b8); border: 3px solid #f2f2f2; box-shadow: 0 0 3px 1px rgba(0,0,0,.45);
  color: #fff; font: 15px/42px "Liberation Sans", sans-serif; text-align: center;
}
.mem-circle small { font-size: 11px; }
.mem-txt { font-size: 11px; color: #222; white-space: nowrap; }

/* dialog */
.dialog {
  position: absolute; z-index: 5; left: 430px; top: 0; width: 748px; height: 585px; display: flex; flex-direction: column;
  background: #f0f0f0; border: 1px solid #1b1b1b; border-top-color: #3a3a3a; border-radius: 5px 5px 0 0; box-shadow: inset 0 0 0 1px #5fc4ea; overflow: hidden;
}
.dlg-title {
  height: 26px; flex: none; margin: 1px 1px 0; padding: 5px 0 0 4px; line-height: 16px; font-size: 12px; color: #222; position: relative;
  background: linear-gradient(#98b5d6, #bcd2e9);
}
.dlg-close {
  position: absolute; left: 708px; top: 4px; width: 32px; height: 18px; border: 1px solid #6b2a22; border-radius: 3px;
  background: linear-gradient(#d88a7c, #b0392a 55%, #a8402f); display: flex; align-items: center; justify-content: center;
}
.dlg-close svg { width: 14px; height: 10px; }
.dlg-body { height: 512px; flex: none; display: flex; padding: 0 0 0 9px; }
.group { border: 1px solid #dadada; position: relative; }
.g-label { position: absolute; left: 7px; top: -8px; line-height: 14px; background: #f0f0f0; font-size: 12px; }
.left-g { width: 481px; height: 498px; margin-top: 15px; padding: 6px 0 0 5px; border-bottom: 1px solid #d4d4d4; display: flex; }
.scroller { width: 458px; overflow: hidden; flex: none; }
.cards { display: grid; grid-template-columns: repeat(3, 149px); grid-auto-rows: 158px; gap: 4px 3px; margin-top: -120px; }
.card { border: 1px solid; border-color: #fff #a3a3a3 #a3a3a3 #fff; padding: 8px 0 0 3px; }
.card.sel { background: #00ffff; }
.pic { width: 140px; height: 140px; display: block; background: #6f93aa; }
.dlg-bar { width: 16px; }
.dlg-bar .sb-btn { height: 13px; }
.dlg-bar .sb-thumb { margin-top: 163px; height: 277px; }
.dlg-bar .sb-btn:last-child { margin-bottom: 2px; }
.right-col { margin-left: 17px; display: flex; flex-direction: column; }
.prop-box { width: 216px; height: 267px; margin: 8px 0 0 8px; border: 1px solid #aaa; background: #fff; padding: 1px; }
.prop { border-collapse: collapse; table-layout: fixed; width: 212px; }
.prop th, .prop td { border: 1px solid #c2c2c2; padding: 0; height: 19px; font-weight: normal; }
.prop tr:first-child th { height: 22px; background: linear-gradient(#fff, #f0f0f0); border-top: 0; }
.prop tr:first-child th:first-child { background: #f0f0f0; border-left: 0; }
.prop th:first-child { width: 21px; background: #f2f2f2; font: 11px/17px "Liberation Mono", monospace; border-left: 0; }
.prop .h-name { width: 91px; }
.prop tr:first-child .h-val { background: linear-gradient(#fbd89e, #f3c064); color: #660066; }
.prop .on th:first-child { background: #fdd28b; color: #4b0a6b; }
.prop td { padding-left: 2px; font: 11px/17px "Liberation Sans", sans-serif; }
.prop td.nm { font: 10px/17px "Liberation Mono", monospace; }
.prop td.pale { background: #ddeeff; }
.prev-g { width: 237px; height: 226px; margin-top: 12px; padding: 10px 0 0 7px; --w: 400; --tw: 400; }
.bigpic { width: 210px; height: 210px; display: block; background: #6f93aa; }
.dlg-foot { flex: 1; display: flex; justify-content: space-between; padding: 12px 16px 0 22px; min-height: 0; }
.hint { line-height: 20px; font-size: 12px; color: #222; }
.hint .lat { line-height: 16px; }
.dlg-btns { display: flex; gap: 15px; }
.btn { width: 72px; height: 23px; border: 1px solid #adadad; background: #e1e1e1; color: #111; }
.btn.primary { border: 2px solid #0078d7; }

/* svg diagrams */
.ti { fill: #3a2f80; text-anchor: middle; font-family: "Noto Sans CJK SC", sans-serif; font-weight: 400; }
.ti.b { font-weight: 700; fill: #352b7c; }
.ti.vb { font-weight: var(--tw, 700); fill: #352b7c; }
.ti.s { text-anchor: start; }
.se { font-family: "Liberation Serif", serif; }
.lt { fill: #e4ecf1; font-family: "Liberation Serif", serif; }
.m { text-anchor: middle; }
.y { fill: none; stroke: #f7f700; stroke-width: .9; }
.soft-y { fill: none; stroke: #c4cc62; stroke-width: 1; }
.soft-yd { fill: none; stroke: #c4cc62; stroke-width: 1; stroke-dasharray: 3 2; }
.soft { fill: none; stroke: #2b3742; stroke-width: .9; }
.faint { fill: none; stroke: #a6bcc4; }
.dots { fill: none; stroke: #d8e4e4; stroke-width: 1.600; stroke-dasharray: 1.500 2.500; }
.caps { fill: none; stroke: #8fb0b4; stroke-width: 8; stroke-linecap: round; }
.caps-d { fill: none; stroke: #cfdcd8; stroke-width: 6; stroke-dasharray: 1 2; }
.ln { fill: none; stroke: #000; stroke-width: .9; }
.t text { fill: #fff; font: 12px "Liberation Serif", serif; font-weight: var(--w, 700); text-anchor: middle; }
.t text.st, .t.st text { text-anchor: start; }
.dot { fill: #f7f700; }
.dash { fill: none; stroke: #000; stroke-width: 1; }
.dash-y { fill: none; stroke: #f7f700; stroke-width: 1; stroke-dasharray: 3 3; }
.abc { font: bold 7px "Liberation Serif", serif; fill: #333; }

/* ime */
.ime {
  position: absolute; z-index: 7; left: 915px; top: 3px; width: 184px; height: 23px; display: flex; align-items: center;
  background: rgba(241, 246, 252, .92); box-shadow: 0 0 1px rgba(120,140,170,.7); padding-left: 34px;
}
.ime-s { position: absolute; left: 0; top: -2px; width: 28px; height: 28px; }
.ime-en { font: bold 14px/16px "Noto Sans CJK SC", sans-serif; color: #1f6fc0; width: 22px; }
.ime-i { width: 14px; height: 14px; flex: none; margin-right: 8px; }
.ime-gap { width: 21px; flex: none; }
.badge75 {
  position: absolute; z-index: 8; left: 979px; top: -30px; width: 46px; height: 49px; border-radius: 50%;
  background: #4dbb5f; border: 1px solid #d5d5d5; box-shadow: 0 1px 2px rgba(0,0,0,.5); color: #fff;
  font: bold 11px/14px "Liberation Sans", sans-serif; text-align: center; padding-top: 30px;
}
```
